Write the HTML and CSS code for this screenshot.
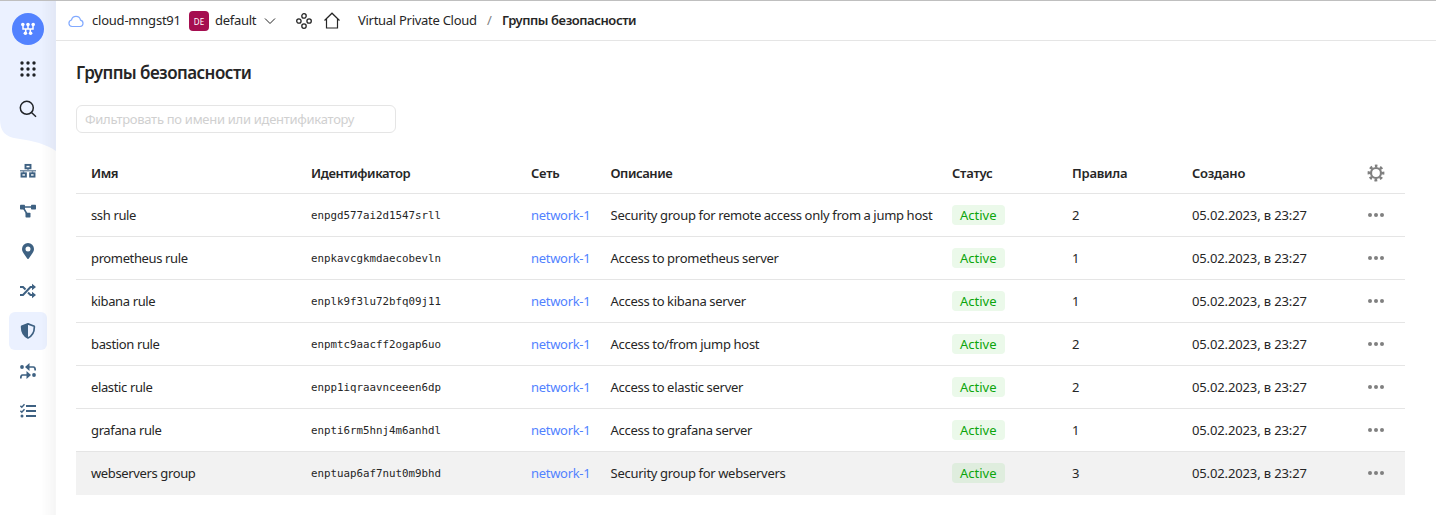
FILE: index.html
```html
<!DOCTYPE html>
<html lang="ru">
<head>
<meta charset="utf-8">
<title>Группы безопасности</title>
<link rel="stylesheet" href="styles.css">
</head>
<body>
<div class="app">
  <aside class="aside">
    <svg class="aside-bg" width="56" height="155" viewBox="0 0 56 155"><path d="M0 0H56V150C46 143 34 140 17 137.500C5 136 0 130 0 118Z" fill="#ebf1ff"/></svg>
    <nav class="nav">
      <a class="logo"><svg width="16" height="16" viewBox="0 0 16 16" fill="none" stroke="#fff" stroke-width="1.500"><path d="M3 4V8H13V4M8 4V8M5.700 8V11.500M10.300 8V11.500"/><g fill="#fff" stroke="none"><circle cx="2.800" cy="3.500" r="1.800"/><circle cx="8" cy="3.500" r="1.800"/><circle cx="13.200" cy="3.500" r="1.800"/><circle cx="5.400" cy="12.300" r="1.800"/><circle cx="10.600" cy="12.300" r="1.800"/></g></svg></a>
      <a class="item"><svg width="16" height="16" viewBox="0 0 16 16" fill="#1f2226"><circle cx="2" cy="2" r="1.700"/><circle cx="8" cy="2" r="1.700"/><circle cx="14" cy="2" r="1.700"/><circle cx="2" cy="8" r="1.700"/><circle cx="8" cy="8" r="1.700"/><circle cx="14" cy="8" r="1.700"/><circle cx="2" cy="14" r="1.700"/><circle cx="8" cy="14" r="1.700"/><circle cx="14" cy="14" r="1.700"/></svg></a>
      <a class="item"><svg width="18" height="18" viewBox="0 0 18 18" fill="none" stroke="#1f2226" stroke-width="1.500"><circle cx="7.800" cy="7.800" r="6.500"/><path d="M12.500 12.500L17 16.800"/></svg></a>
    </nav>
    <nav class="nav sections">
      <a class="item"><svg width="16" height="16" viewBox="0 0 16 16" fill="none" stroke="#3e6182" stroke-width="1.900"><path d="M0 7.700H16M8 5V8M3.500 8V10M12.500 8V10" stroke-width="1.500" opacity=".7"/><rect x="5.500" y="1.900" width="5" height="3.400"/><rect x="1.500" y="10.300" width="4.400" height="3.300"/><rect x="10.100" y="10.300" width="4.400" height="3.300"/></svg></a>
      <a class="item"><svg width="16" height="16" viewBox="0 0 16 16" fill="#3e6182"><rect y="1.800" width="5" height="4.700" rx=".7"/><rect x="11" y="1.800" width="5" height="4.700" rx=".7"/><rect x="5.500" y="9.700" width="5" height="4.700" rx=".7"/><path d="M3 4H12M3.500 5L7 11" fill="none" stroke="#3e6182" stroke-width="1.500"/></svg></a>
      <a class="item"><svg width="16" height="16" viewBox="0 0 16 16" fill="#3e6182" fill-rule="evenodd"><path d="M8 0A6 6 0 0 0 2 6C2 8.500 3.500 10 7.200 15.500Q8 16.500 8.800 15.500C12.500 10 14 8.500 14 6A6 6 0 0 0 8 0ZM8 3.500A2.500 2.500 0 1 1 8 8.500A2.500 2.500 0 1 1 8 3.500Z"/></svg></a>
      <a class="item"><svg width="16" height="16" viewBox="0 0 16 16" fill="none" stroke="#3e6182" stroke-width="2"><path d="M0 4H3L5.500 6.500M0 12H3L10.500 4H13M8 9.500L10.500 12H13"/><path d="M12 .8L16 4L12 7.200ZM12 8.800L16 12L12 15.200Z" fill="#3e6182" stroke="none"/></svg></a>
      <a class="item active"><svg width="16" height="16" viewBox="0 0 16 16"><path d="M8 .9L14.300 3.200C14.600 8.600 12.500 12.700 8 15C3.500 12.700 1.400 8.600 1.700 3.200Z" fill="#ebf1ff" stroke="#3e6182" stroke-width="1.700" stroke-linejoin="round"/><path d="M8 1V15C3.500 12.700 1.400 8.600 1.700 3.200Z" fill="#3e6182"/></svg></a>
      <a class="item"><svg width="16" height="16" viewBox="0 0 16 16" fill="none" stroke="#3e6182" stroke-width="1.700"><path d="M7 4H13.500Q15.200 4 15.200 7.500M9 12H2.500Q.8 12 .8 15.500"/><g fill="#3e6182" stroke="none"><path d="M9.500 0V8L5 4ZM6.500 8V16L11 12Z"/><circle cx="2" cy="4" r="1.900"/><circle cx="14" cy="12" r="1.900"/></g></svg></a>
      <a class="item"><svg width="16" height="16" viewBox="0 0 16 16" fill="none" stroke="#3e6182"><path d="M6 3H16M6 8H16M6 13H16" stroke-width="2"/><path d="M.4 2.800L1.800 4.200L4.500 1.200M.4 7.800L1.800 9.200L4.500 6.200" stroke-width="1.400"/><circle cx="2" cy="13" r="1.500" fill="#3e6182" stroke="none"/></svg></a>
    </nav>
  </aside>
  <div class="page">
    <header class="header">
      <svg class="cloud" width="16" height="14" viewBox="0 0 16 14" fill="none" stroke="#82aaff" stroke-width="1.200"><path d="M4 12.500A3.300 3.300 0 0 1 3.500 6A4.600 4.600 0 0 1 12.500 6.200A3.200 3.200 0 0 1 12.200 12.500Z"/></svg>
      <span class="cloud-name">cloud-mngst91</span>
      <span class="folder-badge">DE</span>
      <span class="folder-name">default</span>
      <svg class="chevron" width="12" height="8" viewBox="0 0 12 8" fill="none" stroke="#262626"><path d="M1 1.500L6 6.500L11 1.500"/></svg>
      <svg class="services" width="16" height="16" viewBox="0 0 16 16" fill="none" stroke="#262626" stroke-width="1.300"><circle cx="8" cy="2.900" r="2.200"/><circle cx="2.900" cy="8" r="2.200"/><circle cx="13.100" cy="8" r="2.200"/><circle cx="8" cy="13.100" r="2.200"/></svg>
      <svg class="home" width="16" height="17" viewBox="0 0 16 17" fill="none" stroke="#262626" stroke-width="1.200"><path d="M.5 8.500L8 1.200L15.500 8.500M2.500 7V16H13.500V7"/></svg>
      <span class="crumb">Virtual Private Cloud</span>
      <span class="slash">/</span>
      <span class="current">Группы безопасности</span>
    </header>
    <main class="content">
      <h1 class="title">Группы безопасности</h1>
      <input class="filter" placeholder="Фильтровать по имени или идентификатору">
      <div class="table">
        <div class="row head"><span class="tight">Имя</span><span class="tight">Идентификатор</span><span>Сеть</span><span class="tight">Описание</span><span>Статус</span><span>Правила</span><span>Создано</span><svg class="gear" width="18" height="18" viewBox="-9 -9 18 18" fill="none" stroke="#808080"><circle r="5" stroke-width="2.200"/><circle r="7" stroke-width="2.800" stroke-dasharray="2.800 2.698" stroke-dashoffset="1.400" transform="rotate(-90)"/></svg></div>
        <div class="row"><span class="name">ssh rule</span><span class="id">enpgd577ai2d1547srll</span><a class="net">network-1</a><span class="desc">Security group for remote access only from a jump host</span><span class="status">Active</span><span>2</span><span class="date">05.02.2023, в 23:27</span><span class="more"><i></i><i></i><i></i></span></div>
        <div class="row"><span class="name">prometheus rule</span><span class="id">enpkavcgkmdaecobevln</span><a class="net">network-1</a><span class="desc">Access to prometheus server</span><span class="status">Active</span><span>1</span><span class="date">05.02.2023, в 23:27</span><span class="more"><i></i><i></i><i></i></span></div>
        <div class="row"><span class="name">kibana rule</span><span class="id">enplk9f3lu72bfq09j11</span><a class="net">network-1</a><span class="desc">Access to kibana server</span><span class="status">Active</span><span>1</span><span class="date">05.02.2023, в 23:27</span><span class="more"><i></i><i></i><i></i></span></div>
        <div class="row"><span class="name">bastion rule</span><span class="id">enpmtc9aacff2ogap6uo</span><a class="net">network-1</a><span class="desc">Access to/from jump host</span><span class="status">Active</span><span>2</span><span class="date">05.02.2023, в 23:27</span><span class="more"><i></i><i></i><i></i></span></div>
        <div class="row"><span class="name">elastic rule</span><span class="id">enpp1iqraavnceeen6dp</span><a class="net">network-1</a><span class="desc">Access to elastic server</span><span class="status">Active</span><span>2</span><span class="date">05.02.2023, в 23:27</span><span class="more"><i></i><i></i><i></i></span></div>
        <div class="row"><span class="name">grafana rule</span><span class="id">enpti6rm5hnj4m6anhdl</span><a class="net">network-1</a><span class="desc">Access to grafana server</span><span class="status">Active</span><span>1</span><span class="date">05.02.2023, в 23:27</span><span class="more"><i></i><i></i><i></i></span></div>
        <div class="row hovered"><span class="name">webservers group</span><span class="id">enptuap6af7nut0m9bhd</span><a class="net">network-1</a><span class="desc">Security group for webservers</span><span class="status">Active</span><span>3</span><span class="date">05.02.2023, в 23:27</span><span class="more"><i></i><i></i><i></i></span></div>
      </div>
    </main>
  </div>
</div>
</body>
</html>
```
FILE: styles.css
```css
* { box-sizing: border-box; }
body { margin: 0; background: #fff; color: #262626; font: 13px/18px "Noto Sans", sans-serif; }
.app { display: flex; height: 515px; border-top: 1px solid #bfbfbf; overflow: hidden; }
.aside { position: relative; width: 56px; flex: none; background: #fff; }
.aside::after { content: ""; position: absolute; inset: 0 0 0 auto; width: 14px; background: linear-gradient(to right, rgba(0,0,0,0), rgba(0,0,0,.035)); border-right: 1px solid rgba(0,0,0,.03); }
.aside-bg { position: absolute; left: 0; top: 0; }
.nav { position: relative; display: flex; flex-direction: column; align-items: center; gap: 2px; padding-top: 12px; }
.logo { display: flex; align-items: center; justify-content: center; width: 32px; height: 32px; margin-bottom: 3px; border-radius: 50%; background: #5282ff; }
.item { display: flex; align-items: center; justify-content: center; width: 38px; height: 38px; border-radius: 6px; }
.sections { padding-top: 24px; }
.active { background: #ebf1ff; }
.page { flex: 1; min-width: 0; }
.header { display: flex; align-items: center; height: 40px; padding-left: 12px; border-bottom: 1px solid #e5e5e5; white-space: nowrap; }
.header > span:not(.folder-badge) { padding-bottom: 1px; }
.cloud-name { width: 89px; margin-left: 8px; margin-right: 8px; letter-spacing: -.22px; }
.folder-badge { width: 20px; height: 20px; border-radius: 4px; background: #a50e50; color: #fff; font-size: 8px; line-height: 22px; text-align: center; }
.folder-name { width: 41px; margin-left: 6px; margin-right: 8px; letter-spacing: -.28px; }
.services { margin-left: 20px; }
.home { margin-left: 12px; }
.crumb { width: 119px; margin-left: 18px; letter-spacing: -.28px; }
.slash { width: 6px; margin: 0 9px 0 10px; color: #808080; }
.current { font-weight: 600; letter-spacing: -.42px; }
.content { padding: 22px 31px 0 20px; }
.title { margin: 0; font-size: 17px; line-height: 20px; font-weight: 600; letter-spacing: -.56px; }
.filter { display: block; width: 320px; height: 28px; margin-top: 22px; padding: 0 8px; border: 1px solid #e5e5e5; border-radius: 6px; font: inherit; letter-spacing: -.29px; outline: none; }
.filter::placeholder { color: #d0d0d0; opacity: 1; }
.table { margin-top: 20px; }
.row { display: grid; grid-template-columns: 220px 220px 79.5px 341.500px 120px 120px 175px 18px; align-items: center; height: 43px; padding-left: 15px; border-top: 1px solid #e5e5e5; white-space: nowrap; }
.head { height: 40px; border-top: 0; font-weight: 600; letter-spacing: -.25px; }
.tight { letter-spacing: -.42px; }
.hovered { background: #f2f2f2; height: 44px; padding-bottom: 1px; }
.name { letter-spacing: -.37px; }
.id { padding-top: 1px; font-family: "DejaVu Sans Mono", monospace; font-size: 10.800px; }
.net { color: #5282ff; letter-spacing: -.3px; }
.desc { letter-spacing: -.26px; word-spacing: -.35px; }
.status { justify-self: start; height: 20px; padding: 0 8px; border-radius: 4px; background: rgba(59,201,53,.1); color: #0ca50c; line-height: 20px; }
.date { letter-spacing: -.13px; }
.more { display: flex; justify-content: center; gap: 2px; }
.more i { width: 4px; height: 4px; border-radius: 50%; background: #808080; }
```
